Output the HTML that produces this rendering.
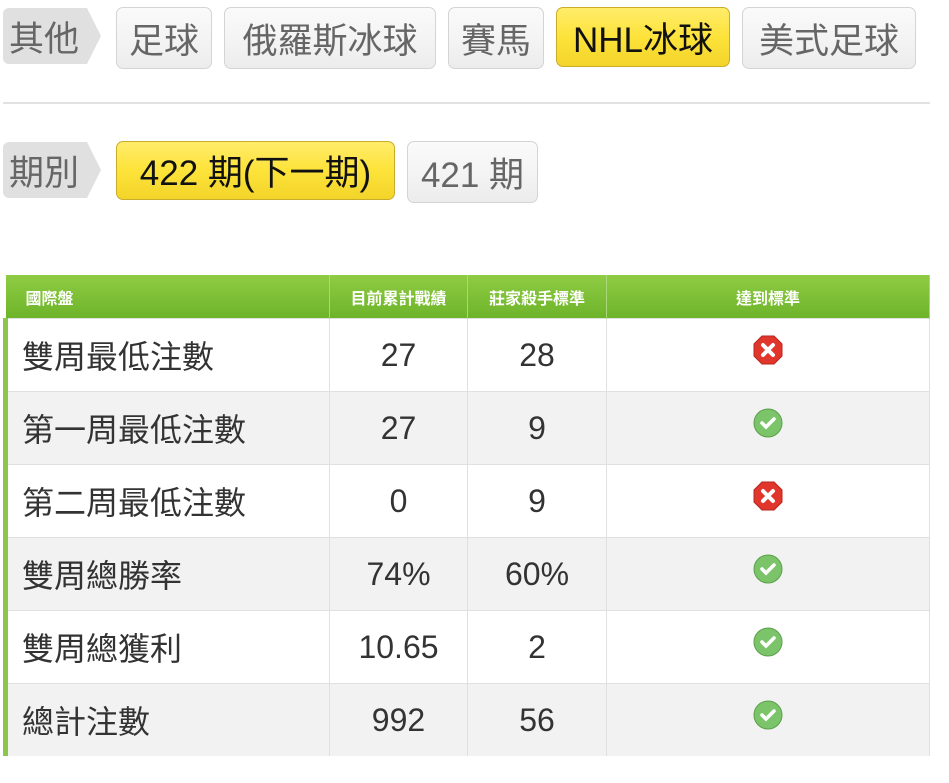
<!DOCTYPE html>
<html><head><meta charset="utf-8">
<style>
body{margin:0;width:949px;height:783px;background:#fff;font-family:"Liberation Sans","Noto Sans CJK TC",sans-serif;position:relative;overflow:hidden}
.b{position:absolute;box-sizing:border-box;border:1px solid #d4d4d4;border-radius:7px;background:linear-gradient(#fafafa,#f4f4f4 50%,#ececec);color:#666;font-size:35px;display:flex;align-items:center;justify-content:center;white-space:nowrap}
.y{background:linear-gradient(#ffec6a,#fde33a 50%,#f3d42a);border-color:#c9ad2a;color:#111}
.lab{position:absolute;height:56px;background:#e0e0e0;color:#666;font-size:35px;display:flex;align-items:center;padding-left:6px;box-sizing:border-box;border-radius:6px 0 0 6px}
.lab:after{content:"";position:absolute;right:-14px;top:0;border-top:28px solid transparent;border-bottom:28px solid transparent;border-left:14px solid #e0e0e0}
.hr{position:absolute;left:3px;width:927px;top:102px;height:2px;background:#e2e2e2}
table{position:absolute;left:3px;top:275px;width:927px;border-collapse:collapse;table-layout:fixed}
th{background:linear-gradient(#8fcc44,#6db42a);color:#fff;font-size:16px;font-weight:bold;height:43px;padding:0;border-right:1px solid #a9d77a;text-align:center}
th:first-child{text-align:left;padding-left:20px}
td{height:72px;border-top:1px solid #e0e0e0;border-right:1px solid #e0e0e0;text-align:center;font-size:32px;color:#333;padding:0}
td:first-child{text-align:left;padding-left:14px;border-left:5px solid #8cc74a}
tr:nth-child(odd) td{background:#f2f2f2}
svg{display:block;margin:-10px auto 0}
</style></head><body>
<div class="lab" style="left:3px;top:8px;width:84px">其他</div>
<div class="b" style="left:116px;top:7px;width:96px;height:62px">足球</div>
<div class="b" style="left:224px;top:7px;width:212px;height:62px">俄羅斯冰球</div>
<div class="b" style="left:448px;top:7px;width:96px;height:62px">賽馬</div>
<div class="b y" style="left:556px;top:7px;width:174px;height:60px">NHL冰球</div>
<div class="b" style="left:742px;top:7px;width:174px;height:62px">美式足球</div>
<div class="hr"></div>
<div class="lab" style="left:3px;top:142px;width:84px">期別</div>
<div class="b y" style="left:116px;top:141px;width:279px;height:59px">422 期(下一期)</div>
<div class="b" style="left:407px;top:141px;width:131px;height:62px">421 期</div>
<table>
<colgroup><col style="width:324px"><col style="width:138px"><col style="width:139px"><col></colgroup>
<tr><th>國際盤</th><th>目前累計戰績</th><th>莊家殺手標準</th><th>達到標準</th></tr>
<tr><td>雙周最低注數</td><td>27</td><td>28</td><td><svg width="32" height="32" viewBox="0 0 32 32"><polygon points="10,2 22,2 30,10 30,22 22,30 10,30 2,22 2,10" fill="#e0362c" stroke="#b8241c"/><path d="M11 11L21 21M21 11L11 21" stroke="#fff" stroke-width="4" stroke-linecap="round"/></svg></td></tr>
<tr><td>第一周最低注數</td><td>27</td><td>9</td><td><svg width="32" height="32" viewBox="0 0 32 32"><circle cx="16" cy="16" r="14" fill="#7cc46a" stroke="#5aa04a"/><path d="M10 16l4 4 8-8" stroke="#fff" stroke-width="3.5" fill="none" stroke-linecap="round"/></svg></td></tr>
<tr><td>第二周最低注數</td><td>0</td><td>9</td><td><svg width="32" height="32" viewBox="0 0 32 32"><polygon points="10,2 22,2 30,10 30,22 22,30 10,30 2,22 2,10" fill="#e0362c" stroke="#b8241c"/><path d="M11 11L21 21M21 11L11 21" stroke="#fff" stroke-width="4" stroke-linecap="round"/></svg></td></tr>
<tr><td>雙周總勝率</td><td>74%</td><td>60%</td><td><svg width="32" height="32" viewBox="0 0 32 32"><circle cx="16" cy="16" r="14" fill="#7cc46a" stroke="#5aa04a"/><path d="M10 16l4 4 8-8" stroke="#fff" stroke-width="3.5" fill="none" stroke-linecap="round"/></svg></td></tr>
<tr><td>雙周總獲利</td><td>10.65</td><td>2</td><td><svg width="32" height="32" viewBox="0 0 32 32"><circle cx="16" cy="16" r="14" fill="#7cc46a" stroke="#5aa04a"/><path d="M10 16l4 4 8-8" stroke="#fff" stroke-width="3.5" fill="none" stroke-linecap="round"/></svg></td></tr>
<tr><td>總計注數</td><td>992</td><td>56</td><td><svg width="32" height="32" viewBox="0 0 32 32"><circle cx="16" cy="16" r="14" fill="#7cc46a" stroke="#5aa04a"/><path d="M10 16l4 4 8-8" stroke="#fff" stroke-width="3.5" fill="none" stroke-linecap="round"/></svg></td></tr>
</table>
</body></html>
